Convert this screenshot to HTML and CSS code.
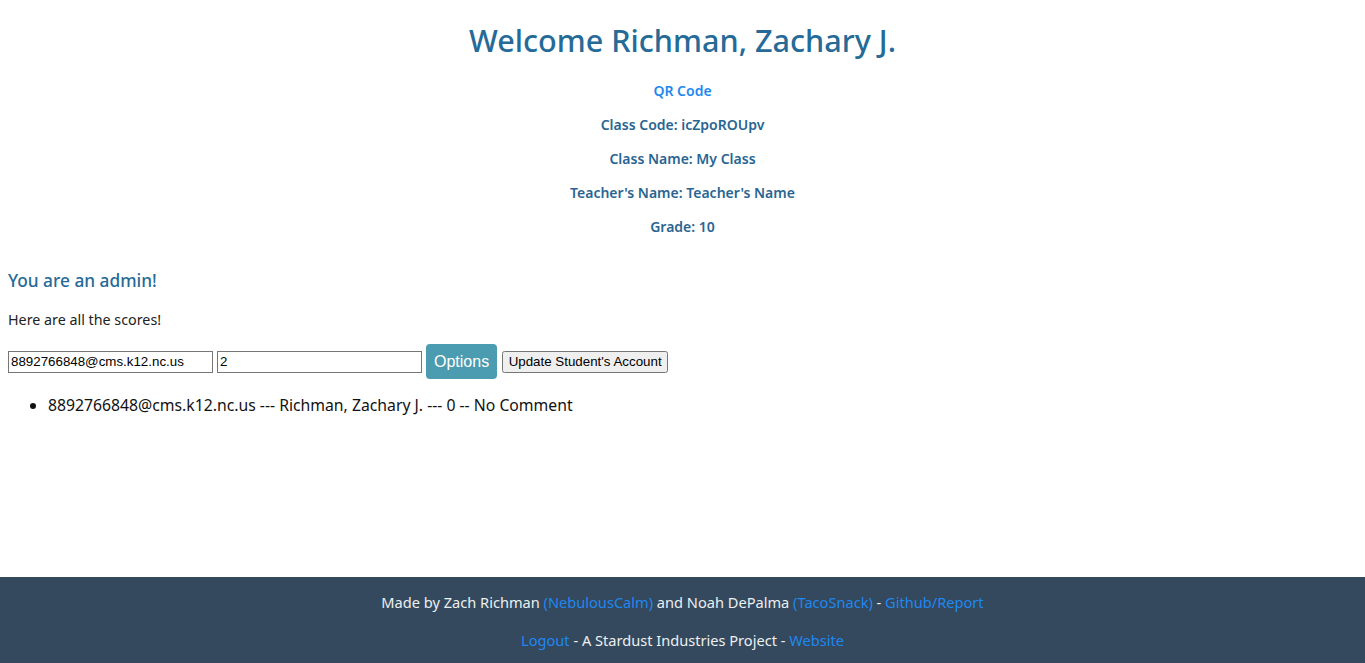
FILE: index.html
```html
<!DOCTYPE html>
<html lang="en">
<head>
<meta charset="utf-8">
<title>Class</title>
<link rel="stylesheet" href="styles.css">
</head>
<body>
<main class="page">
  <h1 class="title">Welcome Richman, Zachary J.</h1>
  <p class="info"><a class="link" href="#">QR Code</a></p>
  <p class="info">Class Code: icZpoROUpv</p>
  <p class="info">Class Name: My Class</p>
  <p class="info">Teacher's Name: Teacher's Name</p>
  <p class="info">Grade: 10</p>
  <h3 class="admin">You are an admin!</h3>
  <p class="scores">Here are all the scores!</p>
  <div class="form-row">
    <input class="field" type="text" value="8892766848@cms.k12.nc.us">
    <input class="field" type="text" value="2">
    <button class="options" type="button">Options</button>
    <button class="update" type="button">Update Student's Account</button>
  </div>
  <ul class="list">
    <li>8892766848@cms.k12.nc.us --- Richman, Zachary J. --- 0 -- No Comment</li>
  </ul>
</main>
<footer class="footer">
  <p class="foot-line">Made by Zach Richman <a class="link" href="#">(NebulousCalm)</a> and Noah DePalma <a class="link" href="#">(TacoSnack)</a> - <a class="link" href="#">Github/Report</a></p>
  <p class="foot-line"><a class="link" href="#">Logout</a> - A Stardust Industries Project - <a class="link" href="#">Website</a></p>
</footer>
</body>
</html>
```
FILE: styles.css
```css
html, body {
  margin: 0;
  padding: 0;
}
body {
  font-family: "Noto Sans", "DejaVu Sans", sans-serif;
  color: #222;
  background: #fff;
  min-height: 100vh;
  display: flex;
  flex-direction: column;
}
.page {
  padding: 0 8px;
  flex: 1;
}
.title {
  font-size: 30.6px;
  line-height: 40px;
  font-weight: 500;
  color: #266a97;
  text-align: center;
  margin: 20px 0 21px;
}
.info {
  font-size: 14px;
  line-height: 20px;
  font-weight: 600;
  color: #2a6592;
  text-align: center;
  margin: 14px 0;
}
.link {
  color: #1e88f0;
  text-decoration: none;
}
.admin {
  font-size: 17.3px;
  line-height: 24px;
  font-weight: 500;
  color: #266a97;
  margin: 32px 0 17px;
}
.scores {
  font-size: 14.3px;
  line-height: 20px;
  margin: 0 0 14px;
  color: #222;
}
.form-row {
  display: flex;
  align-items: center;
  gap: 4px;
}
.field {
  width: 205px;
  height: 22px;
  box-sizing: border-box;
  font-family: "Liberation Sans", Arial, sans-serif;
  font-size: 13.33px;
  padding: 1px 2px;
  border: 1px solid #767676;
  margin: 0;
}
.options {
  font-family: "Liberation Sans", Arial, sans-serif;
  font-size: 16px;
  color: #fff;
  background: #4b9cb0;
  border: none;
  border-radius: 4px;
  height: 35px;
  padding: 0 8px;
  margin: 0;
}
.update {
  font-family: "Liberation Sans", Arial, sans-serif;
  font-size: 13.33px;
  height: 22px;
  width: 166px;
  padding: 1px 4px;
  margin: 0 0 0 1px;
}
.list {
  margin: 16px 0 0;
  padding-left: 40px;
  font-size: 15.75px;
  line-height: 20px;
  color: #111;
}
.footer {
  background: #34495e;
  color: #ecf0f1;
  text-align: center;
  font-size: 14.6px;
  line-height: 20px;
  padding: 15px 0 13px;
}
.foot-line {
  margin: 0;
}
.foot-line + .foot-line {
  margin-top: 18px;
}
```
